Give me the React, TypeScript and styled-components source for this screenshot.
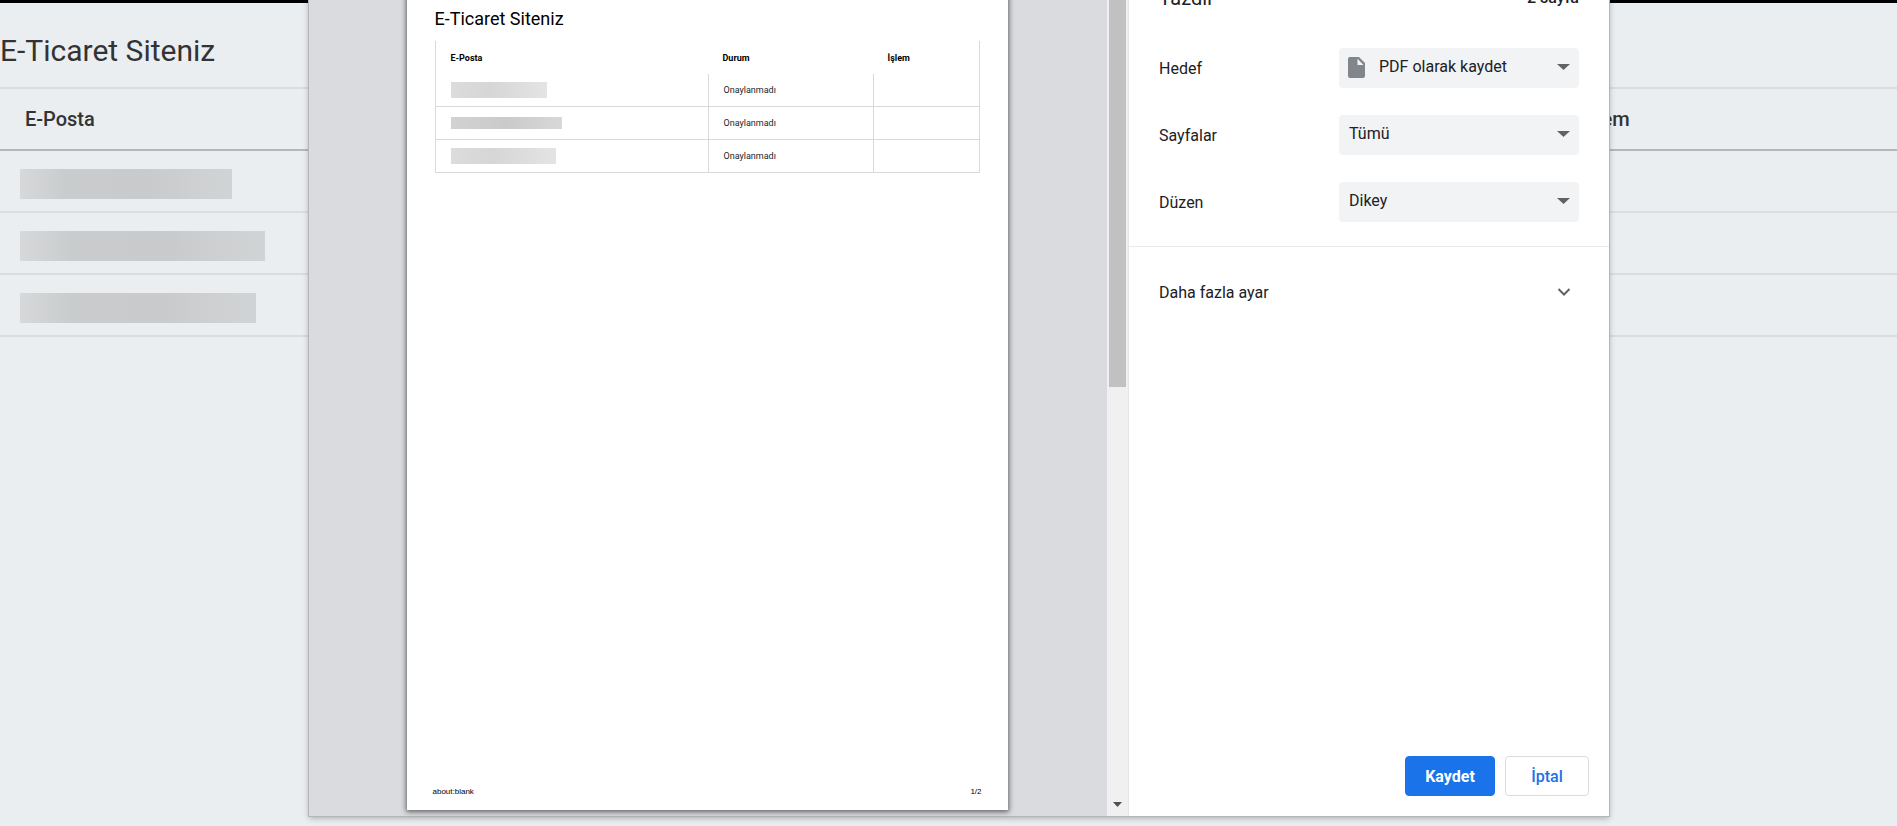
import React from "react";
import styled, { createGlobalStyle } from "styled-components";

const GlobalStyle = createGlobalStyle`
  *, *::before, *::after { box-sizing: border-box; }
  body {
    margin: 0;
    background: #eaeef1;
    color: #333;
    font-family: Roboto, "Liberation Sans", sans-serif;
  }
`;

const Page = styled.div`
  position: relative;
  min-height: 100vh;
  overflow: hidden;
`;

const SiteHeader = styled.header`
  border-top: 3px solid #000;
  padding: 30px 0 18px;
`;

const SiteTitle = styled.h1`
  margin: 0;
  font-size: 30px;
  line-height: 36px;
  font-weight: 400;
`;

const SiteTable = styled.table`
  width: 100%;
  border-spacing: 0;
  border-top: 2px solid #dcdcdc;
  table-layout: fixed;
`;

const SiteHeadCell = styled.th<{ $width: string }>`
  width: ${(p) => p.$width};
  height: 62px;
  padding: 0 25px;
  border-bottom: 2px solid #b7b7b7;
  font-size: 20px;
  font-weight: 500;
  text-align: left;
`;

const SiteCell = styled.td`
  height: 62px;
  padding: 18px 20px 0;
  border-bottom: 2px solid #dcdcdc;
  vertical-align: top;
`;

const SiteMask = styled.div<{ $width: number }>`
  width: ${(p) => p.$width}px;
  height: 30px;
  background: linear-gradient(90deg, #d6d8da, #c9cccd 22%, #c9cacb 60%, #d1d4d6);
`;

const Overlay = styled.div`
  position: absolute;
  inset: 0;
  display: flex;
  justify-content: center;
  padding: 0 0 10px 21px;
`;

const Dialog = styled.section`
  display: flex;
  width: 1300px;
  max-width: 100%;
  margin-top: -40px;
  background: #fff;
  color: #202124;
  box-shadow: 0 0 0 1px #b4b6b9, 0 2px 6px rgba(0, 0, 0, 0.3);
`;

const Preview = styled.div`
  flex: 1;
  display: flex;
  justify-content: center;
  padding: 0 2px 6px 0;
  background: #dadbdf;
`;

const Sheet = styled.article`
  display: flex;
  flex-direction: column;
  width: 601px;
  padding: 47px 28px 12px;
  background: #fff;
  color: #000;
  box-shadow: 0 1px 5px 1px rgba(0, 0, 0, 0.55);
`;

const SheetTitle = styled.h2`
  margin: 0 0 10px;
  font-size: 18px;
  line-height: 24px;
  font-weight: 400;
`;

const SheetTable = styled.table`
  width: 100%;
  table-layout: fixed;
  border-spacing: 0;
  border: solid #d9d9d9;
  border-width: 0 1px;
  font-size: 9px;
  text-align: left;
`;

const SheetHeadCell = styled.th<{ $width?: number }>`
  width: ${(p) => (p.$width ? `${p.$width}px` : "auto")};
  height: 33px;
  padding: 0 15px;
  font-weight: 700;
`;

const SheetCell = styled.td`
  height: 33px;
  padding: 0 15px;
  border-bottom: 1px solid #d9d9d9;
  color: #212529;

  & + & {
    border-left: 1px solid #d9d9d9;
  }
`;

const SheetMask = styled.div<{ $width: number; $dark?: boolean }>`
  width: ${(p) => p.$width}px;
  height: ${(p) => (p.$dark ? 12 : 16)}px;
  background: ${(p) =>
    p.$dark
      ? "linear-gradient(90deg, #d2d2d2, #cacaca 50%, #d8d8d8)"
      : "linear-gradient(90deg, #dcdcdc, #d6d6d6 40%, #e4e4e4)"};
`;

const SheetFooter = styled.footer`
  display: flex;
  justify-content: space-between;
  margin: auto -2px 0;
  font-family: "Liberation Sans", Arial, sans-serif;
  font-size: 8px;
  line-height: 12px;
`;

const Scrollbar = styled.div`
  display: flex;
  flex-direction: column;
  justify-content: space-between;
  align-items: center;
  width: 22px;
  padding: 0 3px 9px 2px;
  background: #f0f0f0;
  border-right: 1px solid #e4e5e7;
`;

const Thumb = styled.div`
  width: 17px;
  height: 427px;
  background: #c1c1c1;
`;

const Sidebar = styled.div`
  display: flex;
  flex-direction: column;
  width: 480px;
  padding-top: 26px;
`;

const SidebarHeader = styled.div`
  display: flex;
  justify-content: space-between;
  align-items: center;
  height: 24px;
  margin-bottom: 38px;
  padding: 0 30px;
`;

const SidebarTitle = styled.h2`
  margin: 0;
  font-size: 20px;
  line-height: 24px;
  font-weight: 400;
`;

const PageCount = styled.span`
  font-size: 16px;
  line-height: 24px;
  font-weight: 500;
`;

const Settings = styled.div`
  display: flex;
  flex-direction: column;
  gap: 27px;
  padding: 0 30px 24px;
  border-bottom: 1px solid #e8eaed;
`;

const SettingRow = styled.div`
  display: flex;
  justify-content: space-between;
  align-items: center;
  font-size: 16px;
`;

const SelectBox = styled.div`
  position: relative;
  width: 240px;
  height: 40px;
`;

const Select = styled.select<{ $icon?: boolean }>`
  appearance: none;
  width: 100%;
  height: 100%;
  margin: 0;
  padding: 0 32px 3px ${(p) => (p.$icon ? 40 : 10)}px;
  border: 0;
  border-radius: 4px;
  background: #f1f3f4;
  color: #202124;
  font-family: inherit;
  font-size: 16px;
`;

const SelectArrow = styled.svg`
  position: absolute;
  top: 16px;
  right: 9px;
  pointer-events: none;
`;

const FileIcon = styled.svg`
  position: absolute;
  top: 9px;
  left: 9px;
  pointer-events: none;
`;

const MoreButton = styled.button`
  display: flex;
  justify-content: space-between;
  align-items: center;
  height: 90px;
  padding: 0 38px 0 30px;
  border: 0;
  background: none;
  color: #202124;
  font-family: inherit;
  font-size: 16px;
`;

const Actions = styled.div`
  display: flex;
  justify-content: flex-end;
  gap: 10px;
  margin-top: auto;
  padding: 20px;
`;

const ActionButton = styled.button<{ $primary?: boolean }>`
  height: 40px;
  width: ${(p) => (p.$primary ? 90 : 84)}px;
  padding: 0;
  border: 1px solid ${(p) => (p.$primary ? "#1a73e8" : "#dadce0")};
  border-radius: 4px;
  background: ${(p) => (p.$primary ? "#1a73e8" : "#fff")};
  color: ${(p) => (p.$primary ? "#fff" : "#1a73e8")};
  font-family: inherit;
  font-size: 16px;
  font-weight: ${(p) => (p.$primary ? 700 : 500)};
`;

const siteRows = [212, 245, 236];

const sheetRows = [
  { width: 96 },
  { width: 111, dark: true },
  { width: 105 },
];

const settings = [
  { id: "hedef", label: "Hedef", value: "PDF olarak kaydet", icon: true },
  { id: "sayfalar", label: "Sayfalar", value: "Tümü" },
  { id: "duzen", label: "Düzen", value: "Dikey" },
];

export default function App() {
  return (
    <>
      <GlobalStyle />
      <Page>
        <SiteHeader>
          <SiteTitle>E-Ticaret Siteniz</SiteTitle>
        </SiteHeader>
        <SiteTable>
          <thead>
            <tr>
              <SiteHeadCell $width="50%">E-Posta</SiteHeadCell>
              <SiteHeadCell $width="32%" />
              <SiteHeadCell $width="18%">İşlem</SiteHeadCell>
            </tr>
          </thead>
          <tbody>
            {siteRows.map((width) => (
              <tr key={width}>
                <SiteCell>
                  <SiteMask $width={width} />
                </SiteCell>
                <SiteCell />
                <SiteCell />
              </tr>
            ))}
          </tbody>
        </SiteTable>

        <Overlay>
          <Dialog role="dialog" aria-labelledby="print-title">
            <Preview>
              <Sheet>
                <SheetTitle>E-Ticaret Siteniz</SheetTitle>
                <SheetTable>
                  <thead>
                    <tr>
                      <SheetHeadCell>E-Posta</SheetHeadCell>
                      <SheetHeadCell $width={165}>Durum</SheetHeadCell>
                      <SheetHeadCell $width={106}>İşlem</SheetHeadCell>
                    </tr>
                  </thead>
                  <tbody>
                    {sheetRows.map((row) => (
                      <tr key={row.width}>
                        <SheetCell>
                          <SheetMask $width={row.width} $dark={row.dark} />
                        </SheetCell>
                        <SheetCell>Onaylanmadı</SheetCell>
                        <SheetCell />
                      </tr>
                    ))}
                  </tbody>
                </SheetTable>
                <SheetFooter>
                  <span>about:blank</span>
                  <span>1/2</span>
                </SheetFooter>
              </Sheet>
            </Preview>
            <Scrollbar>
              <Thumb />
              <svg width="9" height="5" viewBox="0 0 9 5" aria-hidden="true">
                <path d="M0 0h9L4.500 5z" fill="#505050" />
              </svg>
            </Scrollbar>
            <Sidebar>
              <SidebarHeader>
                <SidebarTitle id="print-title">Yazdır</SidebarTitle>
                <PageCount>2 sayfa</PageCount>
              </SidebarHeader>
              <Settings>
                {settings.map((s) => (
                  <SettingRow key={s.id}>
                    <label htmlFor={s.id}>{s.label}</label>
                    <SelectBox>
                      <Select id={s.id} $icon={s.icon}>
                        <option>{s.value}</option>
                      </Select>
                      {s.icon && (
                        <FileIcon width="17" height="21" viewBox="0 0 17 21" aria-hidden="true">
                          <path
                            d="M2 0h9l6 6v13a2 2 0 0 1-2 2H2a2 2 0 0 1-2-2V2a2 2 0 0 1 2-2zM9.500 1.800V8h6z"
                            fill="#80868b"
                            fillRule="evenodd"
                          />
                        </FileIcon>
                      )}
                      <SelectArrow width="13" height="6" viewBox="0 0 13 6" aria-hidden="true">
                        <path d="M0 0h13L6.500 6z" fill="#5f6368" />
                      </SelectArrow>
                    </SelectBox>
                  </SettingRow>
                ))}
              </Settings>
              <MoreButton type="button" aria-expanded="false">
                Daha fazla ayar
                <svg width="14" height="8" viewBox="0 0 14 8" fill="none" aria-hidden="true">
                  <path d="M1.500 1L7 6.500L12.500 1" stroke="#5f6368" strokeWidth="2" />
                </svg>
              </MoreButton>
              <Actions>
                <ActionButton type="button" $primary>
                  Kaydet
                </ActionButton>
                <ActionButton type="button">İptal</ActionButton>
              </Actions>
            </Sidebar>
          </Dialog>
        </Overlay>
      </Page>
    </>
  );
}
